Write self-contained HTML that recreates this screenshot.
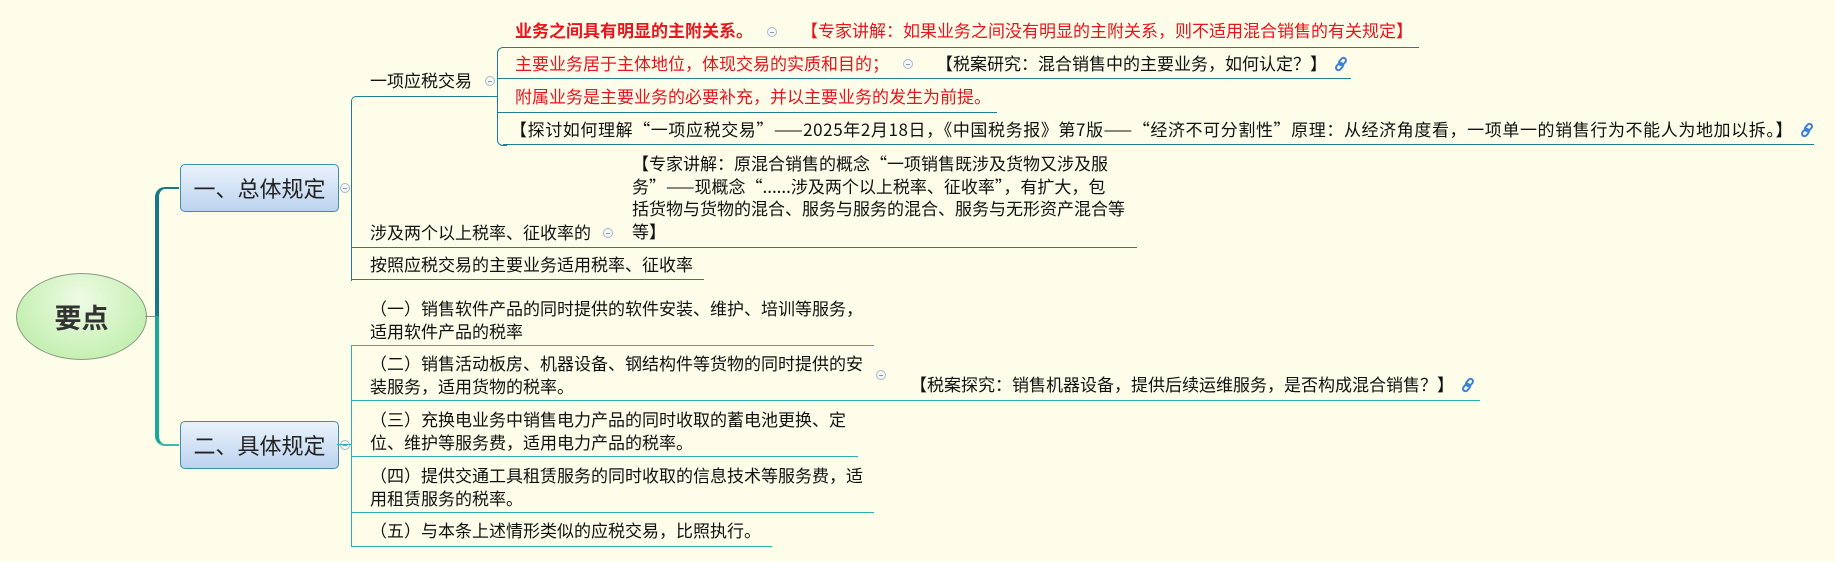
<!DOCTYPE html>
<html><head><meta charset="utf-8">
<style>
html,body{margin:0;padding:0;}
body{width:1835px;height:562px;background:#fdfde9;position:relative;overflow:hidden;font-family:"Noto Sans CJK SC","Liberation Sans",sans-serif;color:#111;}
.t{position:absolute;font-size:17px;line-height:23px;white-space:nowrap;}
.r{color:#e8141e;}
.b{font-weight:bold;}
.h{position:absolute;height:0;border-top:1.5px solid #1f7f90;}
.h2{position:absolute;height:0;border-top:1.5px solid #2fb0b0;}
.c{position:absolute;width:8px;height:8px;border:1px solid #a8b8c8;border-radius:50%;background:#f4f6f8;}
.c:after{content:"";position:absolute;left:2px;top:3.5px;width:4px;height:1px;background:#8898a8;}
.box{position:absolute;left:180px;width:157px;height:46px;border:1px solid #3f8fa8;border-radius:5px;background:linear-gradient(#eaf2fb,#bcd3ef);font-size:22px;line-height:46px;text-align:center;color:#222;}
.lk{display:inline-block;vertical-align:-2px;width:16px;height:16px;margin-left:6px;letter-spacing:0;}
</style></head><body>

<div style="position:absolute;left:16px;top:273px;width:129px;height:85px;border:1px solid #8a9a80;border-radius:50%;background:radial-gradient(ellipse at 50% 30%,#eefbe4,#b6eba0);text-align:center;line-height:85px;font-size:27px;font-weight:bold;color:#333;">要点</div>
<div style="position:absolute;left:145px;top:316px;width:12px;border-top:1px solid #8a9a80;"></div>
<div style="position:absolute;left:155px;top:187px;width:24px;height:130px;border-left:4px solid #17788a;border-top:2px solid #17788a;border-top-left-radius:10px;box-sizing:border-box;"></div>
<div style="position:absolute;left:155px;top:316px;width:24px;height:130px;border-left:4px solid #1aa898;border-bottom:2px solid #3fb8a8;border-bottom-left-radius:10px;box-sizing:border-box;"></div>

<div class="box" style="top:164px;">一、总体规定</div>
<div class="box" style="top:421px;">二、具体规定</div>
<div class="c" style="left:340px;top:183px;"></div>
<div class="c" style="left:340px;top:440px;"></div>

<div style="position:absolute;left:351px;top:96px;width:10px;height:185px;border-left:1.5px solid #1f7f90;border-top:1.5px solid #1f7f90;border-radius:5px 0 0 0;box-sizing:border-box;"></div>
<div class="h" style="left:356px;top:96px;width:141px;"></div>
<div class="h" style="left:351px;top:247px;width:786px;"></div>
<div class="h" style="left:351px;top:279px;width:353px;"></div>

<div class="t" style="left:370px;top:68px;">一项应税交易</div>
<div class="c" style="left:485px;top:76px;"></div>
<div class="t" style="left:370px;top:220px;">涉及两个以上税率、征收率的</div>
<div class="c" style="left:603px;top:228px;"></div>
<div class="t" style="left:370px;top:252px;">按照应税交易的主要业务适用税率、征收率</div>
<div class="t" style="left:632px;top:152px;line-height:22.5px;">【专家讲解：原混合销售的概念“一项销售既涉及货物又涉及服<br>务”——现概念“......涉及两个以上税率、征收率”，有扩大，包<br>括货物与货物的混合、服务与服务的混合、服务与无形资产混合等<br>等】</div>

<div style="position:absolute;left:497px;top:47px;width:10px;height:99px;border-left:1.5px solid #1f7f90;border-top:1.5px solid #1f7f90;border-bottom:1.5px solid #1f7f90;border-radius:6px 0 0 6px;box-sizing:border-box;"></div>
<div class="h" style="left:503px;top:47px;width:916px;"></div>
<div class="h" style="left:497px;top:78px;width:854px;"></div>
<div class="h" style="left:497px;top:112px;width:500px;"></div>
<div class="h" style="left:503px;top:144px;width:1311px;"></div>

<div class="t r b" style="left:515px;top:18px;">业务之间具有明显的主附关系。</div>
<div class="c" style="left:767px;top:27px;"></div>
<div class="t r" style="left:801px;top:18px;">【专家讲解：如果业务之间没有明显的主附关系，则不适用混合销售的有关规定】</div>
<div class="t r" style="left:515px;top:51px;">主要业务居于主体地位，体现交易的实质和目的；</div>
<div class="c" style="left:903px;top:59px;"></div>
<div class="t" style="left:936px;top:51px;">【税案研究：混合销售中的主要业务，如何认定？】<svg class="lk" viewBox="0 0 16 16"><g fill="none" stroke="#3a7fd8" stroke-width="2"><rect x="7" y="1.5" width="5" height="8" rx="2.5" transform="rotate(40 9.5 5.5)"/><rect x="4" y="6.5" width="5" height="8" rx="2.5" transform="rotate(40 6.5 10.5)"/></g></svg></div>
<div class="t r" style="left:515px;top:84px;">附属业务是主要业务的必要补充，并以主要业务的发生为前提。</div>
<div class="t" style="left:510px;top:117px;letter-spacing:0.6px;">【探讨如何理解“一项应税交易”——2025年2月18日，《中国税务报》第7版——“经济不可分割性”原理：从经济角度看，一项单一的销售行为不能人为地加以拆。】<svg class="lk" viewBox="0 0 16 16"><g fill="none" stroke="#3a7fd8" stroke-width="2"><rect x="7" y="1.5" width="5" height="8" rx="2.5" transform="rotate(40 9.5 5.5)"/><rect x="4" y="6.5" width="5" height="8" rx="2.5" transform="rotate(40 6.5 10.5)"/></g></svg></div>

<div style="position:absolute;left:351px;top:345px;width:10px;height:202px;border-left:1.5px solid #2fb0b0;box-sizing:border-box;"></div>
<div class="h2" style="left:337px;top:444px;width:14px;"></div>
<div class="h2" style="left:351px;top:345px;width:523px;"></div>
<div class="h2" style="left:351px;top:400px;width:1129px;"></div>
<div class="h2" style="left:351px;top:456px;width:507px;"></div>
<div class="h2" style="left:351px;top:512px;width:523px;"></div>
<div class="h2" style="left:351px;top:546px;width:421px;"></div>

<div class="t" style="left:370px;top:296px;">（一）销售软件产品的同时提供的软件安装、维护、培训等服务，<br>适用软件产品的税率</div>
<div class="t" style="left:370px;top:351px;">（二）销售活动板房、机器设备、钢结构件等货物的同时提供的安<br>装服务，适用货物的税率。</div>
<div class="c" style="left:876px;top:370px;"></div>
<div class="t" style="left:910px;top:372px;">【税案探究：销售机器设备，提供后续运维服务，是否构成混合销售？】<svg class="lk" viewBox="0 0 16 16"><g fill="none" stroke="#3a7fd8" stroke-width="2"><rect x="7" y="1.5" width="5" height="8" rx="2.5" transform="rotate(40 9.5 5.5)"/><rect x="4" y="6.5" width="5" height="8" rx="2.5" transform="rotate(40 6.5 10.5)"/></g></svg></div>
<div class="t" style="left:370px;top:407px;">（三）充换电业务中销售电力产品的同时收取的蓄电池更换、定<br>位、维护等服务费，适用电力产品的税率。</div>
<div class="t" style="left:370px;top:463px;">（四）提供交通工具租赁服务的同时收取的信息技术等服务费，适<br>用租赁服务的税率。</div>
<div class="t" style="left:370px;top:518px;">（五）与本条上述情形类似的应税交易，比照执行。</div>
</body></html>
